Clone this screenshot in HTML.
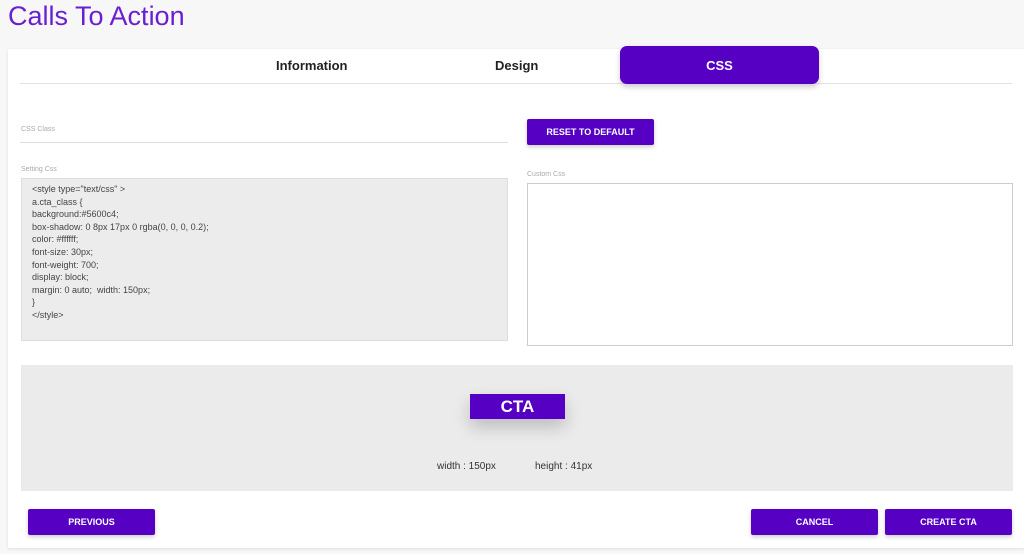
<!DOCTYPE html>
<html><head><style>
*{margin:0;padding:0;box-sizing:border-box}
body{width:1024px;height:554px;background:#f7f7f7;font-family:"Liberation Sans",sans-serif;position:relative;overflow:hidden}
.a{position:absolute}
.btn{position:absolute;background:#5600c4;color:#fff;font-weight:bold;font-size:9px;display:flex;align-items:center;justify-content:center;border-radius:2px;box-shadow:0 2px 4px rgba(0,0,0,.2)}
.lbl{position:absolute;font-size:7px;color:#aaa}
</style></head><body>
<div class="a" style="left:8px;top:1px;font-size:27px;color:#6a1fd0;">Calls To Action</div>
<div class="a" style="left:8px;top:49px;width:1016px;height:499px;background:#fff;box-shadow:0 1px 3px rgba(0,0,0,.1)"></div>
<div class="a" style="left:20px;top:83px;width:992px;height:1px;background:#e2e2e2"></div>
<div class="a" style="left:276px;top:58px;font-size:13px;font-weight:bold;color:#222">Information</div>
<div class="a" style="left:495px;top:58px;font-size:13px;font-weight:bold;color:#222">Design</div>
<div class="a" style="left:620px;top:46px;width:199px;height:38px;background:#5600c4;border-radius:7px;color:#fff;font-weight:bold;font-size:13px;display:flex;align-items:center;justify-content:center;box-shadow:0 3px 6px rgba(0,0,0,.2)">CSS</div>
<div class="lbl" style="left:21px;top:126px">CSS Class</div>
<div class="a" style="left:20px;top:142px;width:488px;height:1px;background:#ddd"></div>
<div class="btn" style="left:527px;top:119px;width:127px;height:26px">RESET TO DEFAULT</div>
<div class="lbl" style="left:21px;top:166px">Setting Css</div>
<div class="a" style="left:21px;top:178px;width:487px;height:163px;background:#ececec;border:1px solid #ddd;font-size:9px;color:#444;line-height:12.6px;padding:4px 10px">&lt;style type="text/css" &gt;<br>a.cta_class {<br>background:#5600c4;<br>box-shadow: 0 8px 17px 0 rgba(0, 0, 0, 0.2);<br>color: #ffffff;<br>font-size: 30px;<br>font-weight: 700;<br>display: block;<br>margin: 0 auto;&nbsp; width: 150px;<br>}<br>&lt;/style&gt;</div>
<div class="lbl" style="left:527px;top:171px">Custom Css</div>
<div class="a" style="left:527px;top:183px;width:486px;height:163px;background:#fff;border:1px solid #ccc"></div>
<div class="a" style="left:21px;top:365px;width:992px;height:126px;background:#ebebeb"></div>
<div class="a" style="left:470px;top:394px;width:95px;height:25px;background:#5600c4;color:#fff;font-weight:bold;font-size:17px;display:flex;align-items:center;justify-content:center;box-shadow:0 8px 17px rgba(0,0,0,.2)">CTA</div>
<div class="a" style="left:437px;top:461px;font-size:10px;color:#333">width : 150px</div>
<div class="a" style="left:535px;top:461px;font-size:10px;color:#333">height : 41px</div>
<div class="btn" style="left:28px;top:509px;width:127px;height:26px">PREVIOUS</div>
<div class="btn" style="left:751px;top:509px;width:127px;height:26px">CANCEL</div>
<div class="btn" style="left:885px;top:509px;width:127px;height:26px">CREATE CTA</div>
</body></html>
